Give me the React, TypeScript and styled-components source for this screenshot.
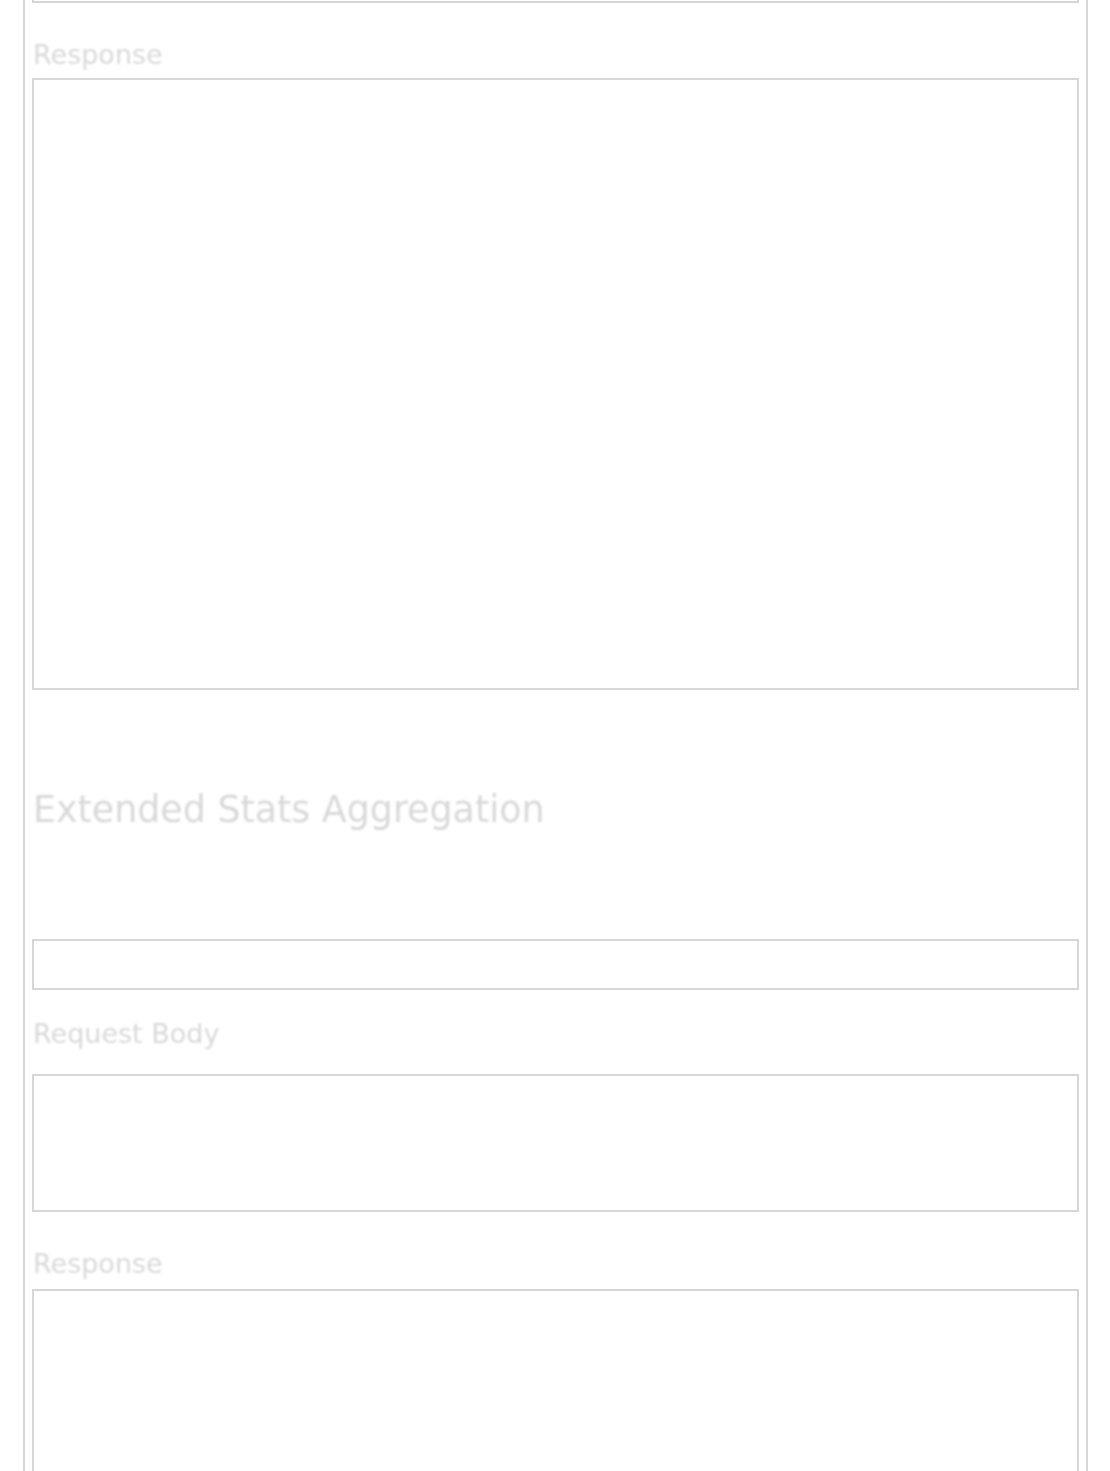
import styled, { createGlobalStyle } from "styled-components";

const GlobalStyle = createGlobalStyle`
  html, body {
    margin: 0;
    padding: 0;
    background: #ffffff;
  }
  * {
    box-sizing: border-box;
  }
`;

export const Page = styled.div`
  display: flex;
  flex-direction: column;
  width: 1065px;
  margin: 0 22px 0 23px;
  min-height: 100vh;
  padding: 0 7px;
  border-left: 2px solid #d6d6d6;
  border-right: 2px solid #d6d6d6;
  overflow: hidden;
  font-family: "DejaVu Sans", Verdana, sans-serif;
`;

export const Label = styled.div<{ $top: number; $bottom: number }>`
  margin-top: ${(p) => p.$top}px;
  margin-bottom: ${(p) => p.$bottom}px;
  padding-left: 1px;
  font-size: 27px;
  line-height: 30px;
  color: #d9d9d9;
  filter: blur(0.9px);
`;

export const Heading = styled.h2`
  margin: 99px 0 108px;
  padding-left: 1px;
  font-size: 36.4px;
  font-weight: normal;
  line-height: 42px;
  color: #d9d9d9;
  filter: blur(0.9px);
`;

export const Field = styled.textarea<{ $height: number; $top?: number }>`
  display: block;
  flex-shrink: 0;
  width: 100%;
  height: ${(p) => p.$height}px;
  margin: ${(p) => p.$top ?? 0}px 0 0;
  padding: 4px;
  border: 2px solid #d6d6d6;
  border-radius: 0;
  background: #ffffff;
  resize: none;
  outline: none;
  font-family: "DejaVu Sans Mono", monospace;
  font-size: 13px;
`;

export const Input = styled.input`
  display: block;
  flex-shrink: 0;
  width: 100%;
  height: 51px;
  padding: 0 8px;
  border: 2px solid #d6d6d6;
  border-radius: 0;
  background: #ffffff;
  outline: none;
  font-family: "DejaVu Sans", sans-serif;
  font-size: 16px;
`;

export default function App() {
  return (
    <>
      <GlobalStyle />
      <Page>
        <Field $height={100} $top={-97} readOnly />
        <Label $top={37} $bottom={8}>Response</Label>
        <Field $height={612} readOnly />

        <Heading>Extended Stats Aggregation</Heading>
        <Input readOnly />
        <Label $top={29} $bottom={25}>Request Body</Label>
        <Field $height={138} readOnly />
        <Label $top={37} $bottom={10}>Response</Label>
        <Field $height={612} readOnly />
      </Page>
    </>
  );
}
